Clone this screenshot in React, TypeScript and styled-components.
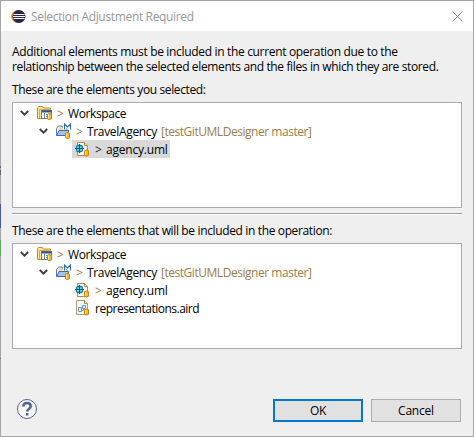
import React from "react";
import styled, { createGlobalStyle } from "styled-components";

const Global = createGlobalStyle`
  * { box-sizing: border-box; }
  body { margin: 0; background: #efefef; }
`;

const Dialog = styled.div`
  width: 474px;
  height: 437px;
  padding: 1px;
  display: flex;
  flex-direction: column;
  font: 12px/15px "Open Sans", "Noto Sans", sans-serif;
  color: #000;
  background:
    linear-gradient(#a4a4a4 166px, #65657c 166px 168px, #a4a4a4 168px 170px, #65657c 170px 175px,
      #a4a4a4 175px 204px, #4858a0 204px 228px, #a4a4a4 228px 240px, #5ca860 240px 256px,
      #a4a4a4 256px 358px, #777 358px 359px, #a4a4a4 359px) left / 1px 100% no-repeat,
    #a4a4a4;
`;

const TitleBar = styled.header`
  height: 30px;
  flex: none;
  display: flex;
  align-items: center;
  padding: 0 10px 0 10px;
  background: #fff;
  color: #999;
`;

const Body = styled.main`
  flex: 1;
  display: flex;
  flex-direction: column;
  padding: 13px 11px 0;
  background: #efefef;
`;

const Text = styled.span<{ $track?: number; $color?: string }>`
  white-space: pre;
  letter-spacing: ${(p) => p.$track ?? 0}px;
  color: ${(p) => p.$color ?? "inherit"};
`;

const Title = styled(Text)`
  flex: 1;
  margin-left: 5px;
`;

const Message = styled.div`
  display: flex;
  flex-direction: column;
`;

const Caption = styled.div<{ $top: number; $bottom: number }>`
  display: flex;
  margin: ${(p) => p.$top}px 0 ${(p) => p.$bottom}px;
`;

const Tree = styled.div`
  width: 450px;
  height: 106px;
  flex: none;
  padding-top: 1px;
  border: 1px solid #a9abb0;
  background: #fff;
`;

const Row = styled.div<{ $level: number }>`
  display: flex;
  align-items: center;
  height: 18px;
  padding-left: ${(p) => 7 + p.$level * 19}px;
`;

const Twisty = styled.svg`
  width: 10px;
  height: 8px;
  flex: none;
  margin-right: 7px;
`;

const Leaf = styled.div<{ $selected?: boolean }>`
  display: flex;
  align-items: center;
  height: 18px;
  margin-left: 14px;
  padding: 0 2px 0 3px;
  background: ${(p) => (p.$selected ? "#d9d9d9" : "transparent")};
`;

const Icon = styled.svg`
  width: 16px;
  height: 16px;
  flex: none;
  margin-right: 4px;
`;

const Mark = styled.span<{ $color?: string }>`
  width: 11px;
  flex: none;
  color: ${(p) => p.$color ?? "#9c7d48"};
`;

const Repo = styled(Text)`
  margin-left: 4px;
  color: #9c7d48;
`;

const Separator = styled.div`
  width: 450px;
  height: 2px;
  flex: none;
  margin-top: 5px;
  border-top: 1px solid #a0a0a0;
  background: #fff;
`;

const Footer = styled.footer`
  width: 449px;
  display: flex;
  align-items: flex-start;
  gap: 8px;
  margin-top: 50px;
`;

const HelpIcon = styled.svg`
  width: 22px;
  height: 22px;
  margin: -1px auto 0 4px;
`;

const Button = styled.button<{ $primary?: boolean }>`
  width: 90px;
  height: 23px;
  padding: 0;
  font: inherit;
  color: #000;
  background: #e1e1e1;
  border: ${(p) => (p.$primary ? "2px solid #0078d7" : "1px solid #adadad")};
`;

const Chevron = () => (
  <Twisty viewBox="0 0 10 8">
    <path d="M.8 2 4.500 5.700 8.200 2" fill="none" stroke="#404040" strokeWidth="1.9" />
  </Twisty>
);

const Cylinder = ({ x, y }: { x: number; y: number }) => (
  <g transform={`translate(${x} ${y})`}>
    <path d="M.5 1.200Q2.500-.2 4.500 1.200v4.600Q2.500 7.200.5 5.800Z" fill="#f7b92c" stroke="#c9800f" />
    <path d="M1.500 1.500v4" stroke="#ffe796" />
  </g>
);

const WorkspaceIcon = () => (
  <Icon viewBox="0 0 16 16">
    <path d="M.5 13.500v-11l1-1h4l1 1.500h7v10.500Z" fill="#fbe3a0" stroke="#c58a34" />
    <path d="M2.500 13V4.500H14" fill="none" stroke="#dca650" />
    <rect x="4.500" y="5.500" width="10" height="8" fill="#fff" stroke="#927048" />
    <path d="M5 6.500h9.500" stroke="#245a9c" strokeWidth="2" />
    <path d="M7.500 8v5M9 9.500h3M9 11.500h2" stroke="#5685b5" />
    <Cylinder x={10} y={8} />
  </Icon>
);

const ProjectIcon = () => (
  <Icon viewBox="0 0 16 16">
    <path d="M.5 12.500v-7l2-2.500h3.500l1 2h4v7.500Z" fill="#f2f7ff" stroke="#5678b0" />
    <path d="M2 6 4 4h2l1 2-2 1.500Z" fill="#f7d67e" />
    <path d="M3 7.500h10l-2.500 5H.8Z" fill="#a4c2ea" stroke="#446aa8" />
    <path d="M8.500 6V1L11.500 4l3-3v5" fill="none" stroke="#fff" strokeWidth="3" />
    <path d="M8.500 6.500V1L11.500 4l3-3v5.500" fill="none" stroke="#326f9c" strokeWidth="1.200" />
    <Cylinder x={9} y={9} />
  </Icon>
);

const UmlIcon = () => (
  <Icon viewBox="0 0 16 16">
    <path d="M2.500 1.500h7l3 3v10h-10Z" fill="#fffdf3" stroke="#b28b4d" />
    <path d="M9.500 1.500v3h3" fill="#f3dc9d" stroke="#b28b4d" />
    <rect x="1.500" y="4.500" width="6" height="6" rx="1.500" fill="#7cd3da" stroke="#11809a" strokeWidth="1.300" />
    <path d="M4.500 3v9M0 7.500h9" stroke="#075d7a" strokeWidth="1.100" />
    <Cylinder x={9} y={8.500} />
  </Icon>
);

const AirdIcon = () => (
  <Icon viewBox="0 0 16 16">
    <path d="M1.500.5h8l3 3v11h-11Z" fill="#f6f9fb" stroke="#b49a6c" />
    <path d="M9.500.5v3h3" fill="#f3dc9d" stroke="#b28b4d" />
    <path d="M3.500 7.500h3v4h-3ZM7.500 5.500h3v3h-3ZM6.500 10.500h2v-2" fill="#dcebf5" stroke="#6b9dbd" />
    <Cylinder x={9} y={8.500} />
  </Icon>
);

const Branch = () => (
  <>
    <Row $level={0}>
      <Chevron />
      <WorkspaceIcon />
      <Mark>&gt;</Mark>
      <Text $track={-0.4}>Workspace</Text>
    </Row>
    <Row $level={1}>
      <Chevron />
      <ProjectIcon />
      <Mark>&gt;</Mark>
      <Text $track={-0.33}>TravelAgency</Text>
      <Repo $track={-0.46}>[testGitUMLDesigner master]</Repo>
    </Row>
  </>
);

export default function App() {
  return (
    <>
      <Global />
      <Dialog>
        <TitleBar>
          <svg width="15" height="15" viewBox="0 0 15 15">
            <circle cx="6.500" cy="7.500" r="6.400" fill="#f7941e" />
            <circle cx="8" cy="7.500" r="6.500" fill="#2c2255" />
            <path d="M2.500 5.500h11M2 7.500h12M2.500 9.500h11" stroke="#fff" strokeWidth="1" />
          </svg>
          <Title $track={-0.34}>Selection Adjustment Required</Title>
          <svg width="11" height="11" viewBox="0 0 11 11">
            <path d="m.5.5 10 10m0-10-10 10" stroke="#888" strokeWidth="1" />
          </svg>
        </TitleBar>
        <Body>
          <Message>
            <Text $track={-0.33}>Additional elements must be included in the current operation due to the</Text>
            <Text $track={-0.367}>relationship between the selected elements and the files in which they are stored.</Text>
          </Message>
          <Caption $top={8} $bottom={5}>
            <Text $track={-0.38}>These are the elements you selected:</Text>
          </Caption>
          <Tree>
            <Branch />
            <Row $level={2}>
              <Leaf $selected>
                <UmlIcon />
                <Mark $color="#222">&gt;</Mark>
                <Text $track={-0.2}>agency.uml</Text>
              </Leaf>
            </Row>
          </Tree>
          <Separator />
          <Caption $top={8} $bottom={5}>
            <Text $track={-0.36}>These are the elements that will be included in the operation:</Text>
          </Caption>
          <Tree>
            <Branch />
            <Row $level={2}>
              <Leaf>
                <UmlIcon />
                <Mark>&gt;</Mark>
                <Text $track={-0.2}>agency.uml</Text>
              </Leaf>
            </Row>
            <Row $level={2}>
              <Leaf>
                <AirdIcon />
                <Text $track={-0.5}>representations.aird</Text>
              </Leaf>
            </Row>
          </Tree>
          <Footer>
            <HelpIcon viewBox="0 0 22 22">
              <circle cx="11" cy="11" r="9.500" fill="#f7f7f7" stroke="#53658d" />
              <path d="M7.300 8.500Q7.300 5 11 5t3.700 3.200c0 2.800-3.500 2.600-3.500 5.300M11.200 15v2.400" fill="none" stroke="#53658d" strokeWidth="2.500" />
            </HelpIcon>
            <Button $primary><Text $track={-0.4}>OK</Text></Button>
            <Button><Text $track={-0.2}>Cancel</Text></Button>
          </Footer>
        </Body>
      </Dialog>
    </>
  );
}
